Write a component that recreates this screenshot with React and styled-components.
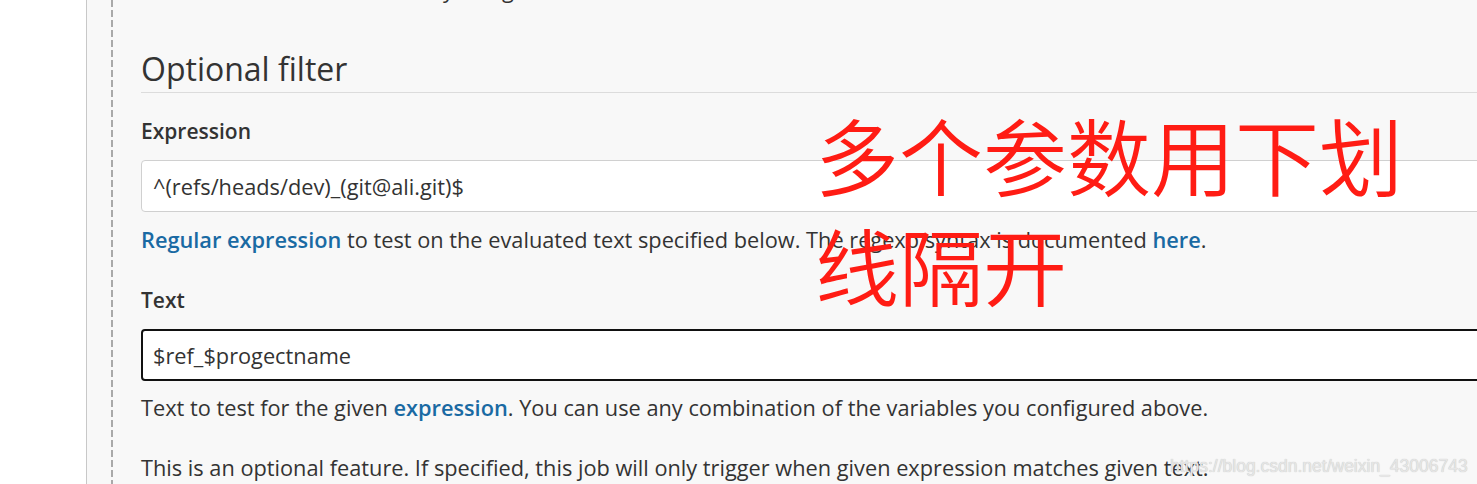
import React from 'react';
import styled, { createGlobalStyle } from 'styled-components';

const GlobalStyle = createGlobalStyle`
  html, body {
    margin: 0;
    padding: 0;
    background: #fff;
    overflow: hidden;
  }
  body {
    font-family: "Open Sans", "Noto Sans", sans-serif;
    color: #333;
  }
`;

const Page = styled.div`
  display: flex;
  width: 1477px;
  height: 484px;
  overflow: hidden;
  position: relative;
`;

const SideGap = styled.div`
  width: 86px;
  flex-shrink: 0;
  background: #fff;
  border-right: 1px solid #c8c8c8;
`;

const Main = styled.div`
  flex: 1;
  display: flex;
  background: #f8f8f8;
  min-width: 0;
`;

const Rail = styled.div`
  width: 2px;
  flex-shrink: 0;
  margin-left: 24px;
  background: repeating-linear-gradient(
    to bottom,
    #a9a9a9 0 7px,
    transparent 7px 10px
  );
`;

const Content = styled.div`
  flex: 1;
  min-width: 0;
  padding-left: 28px;
  margin-right: -40px;
`;

const CutLine = styled.p`
  margin: -25px 0 0;
  font-size: 21.75px;
  line-height: 29px;
  padding-left: ${({ $indent }) => $indent}px;
  white-space: nowrap;
`;

const Heading = styled.h2`
  margin: 43px 0 0;
  font-size: 32px;
  font-weight: 400;
  line-height: 44px;
  color: #333;
  padding-bottom: 1px;
  border-bottom: 1px solid #dcdcdc;
`;

const Field = styled.div`
  margin-top: ${({ $top }) => $top}px;
`;

const Label = styled.div`
  font-size: 21px;
  font-weight: 600;
  line-height: 30px;
  color: #333;
`;

const Input = styled.div`
  box-sizing: border-box;
  margin-top: 14px;
  height: 52px;
  display: flex;
  align-items: center;
  padding-left: ${({ $focus }) => ($focus ? 10 : 11)}px;
  background: #fff;
  border: ${({ $focus }) => ($focus ? '2px solid #111' : '1px solid #d0d0d0')};
  border-radius: 4px;
  font-size: 21.75px;
  color: #333;
  white-space: nowrap;
`;

const Help = styled.p`
  margin: ${({ $top }) => $top}px 0 0;
  font-size: 21.75px;
  line-height: 29px;
  color: #333;
  white-space: nowrap;
`;

const Link = styled.a`
  color: #1a6aa3;
  font-weight: 600;
  text-decoration: none;
`;

const Annotation = styled.div`
  position: absolute;
  left: 815px;
  top: 99px;
  width: 600px;
  font-family: "Noto Sans CJK SC", sans-serif;
  font-weight: 350;
  font-size: 84px;
  line-height: 110px;
  color: #ff1c14;
  pointer-events: none;
`;

const Watermark = styled.div`
  position: absolute;
  left: 1170px;
  top: 456px;
  font-family: "Liberation Sans", Arial, sans-serif;
  font-size: 17.5px;
  color: #e6e6e6;
  text-shadow: 0 0 1px #b8b8b8;
`;

export default function App() {
  return (
    <>
      <GlobalStyle />
      <Page>
        <SideGap />
        <Main>
          <Rail />
          <Content>
            <CutLine $indent={22}>These values are resolved by using the</CutLine>
            <Heading>Optional filter</Heading>
            <Field $top={23}>
              <Label>Expression</Label>
              <Input>^(refs/heads/dev)_(git@ali.git)$</Input>
              <Help $top={13}>
                <Link href="#">Regular expression</Link> to test on the evaluated text specified below. The regexp syntax is documented{' '}
                <Link href="#">here</Link>.
              </Help>
            </Field>
            <Field $top={31}>
              <Label>Text</Label>
              <Input $focus>$ref_$progectname</Input>
              <Help $top={12}>
                Text to test for the given <Link href="#">expression</Link>. You can use any combination of the variables you configured above.
              </Help>
              <Help $top={31}>
                This is an optional feature. If specified, this job will only trigger when given expression matches given text.
              </Help>
            </Field>
          </Content>
        </Main>
        <Annotation>多个参数用下划线隔开</Annotation>
        <Watermark>https://blog.csdn.net/weixin_43006743</Watermark>
      </Page>
    </>
  );
}
